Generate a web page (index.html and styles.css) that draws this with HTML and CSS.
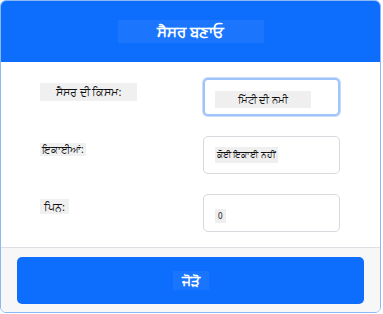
FILE: index.html
```html
<!DOCTYPE html>
<html lang="pa">

<head>
    <meta charset="UTF-8">
    <meta name="viewport" content="width=device-width, initial-scale=1.0">
    <title>ਸੈਸਰ ਬਣਾਓ</title>
    <link rel="stylesheet" href="styles.css">
</head>

<body>
    <div class="card">
        <header class="cardHeader">
            <span class="title">ਸੈਸਰ ਬਣਾਓ</span>
        </header>

        <div class="cardBody">
            <div class="label labelType"><span>ਸੈਸਰ ਦੀ ਕਿਸਮ:</span></div>
            <div class="field focused"><span class="value valueWide">ਮਿੱਟੀ ਦੀ ਨਮੀ</span></div>

            <div class="label labelUnits"><span>ਇਕਾਈਆਂ:</span></div>
            <div class="field"><span class="value valueSmall">ਕੋਈ ਇਕਾਈ ਨਹੀਂ</span></div>

            <div class="label labelPin"><span>ਪਿਨ:</span></div>
            <div class="field"><span class="value valueNum">0</span></div>
        </div>

        <div class="cardFooter">
            <button class="addButton"><span>ਜੋੜੋ</span></button>
        </div>
    </div>
</body>

</html>
```

FILE: styles.css
```css
body {
    margin: 0;
    font-family: "Noto Sans", "DejaVu Sans", sans-serif;
    background-color: white;
}

.card {
    width: 381px;
    height: 313px;
    box-sizing: border-box;
    border: 1px solid #8db8f6;
    border-radius: 6px;
    overflow: hidden;
    display: flex;
    flex-direction: column;
}

.cardHeader {
    height: 61px;
    background-color: #0d6efd;
    display: flex;
    align-items: center;
    justify-content: center;
}

.title {
    color: white;
    font-size: 15px;
    font-weight: bold;
    width: 146px;
    height: 23px;
    line-height: 23px;
    text-align: center;
    background-color: rgba(255, 255, 255, 0.06);
}

.cardBody {
    flex: 1;
    background-color: white;
    display: grid;
    grid-template-columns: 163px 137px;
    grid-auto-rows: 38px;
    row-gap: 20px;
    padding: 16px 0 0 39px;
}

.label span {
    display: inline-block;
    background-color: #f0f0f0;
    color: #111;
}

.labelType span {
    margin-top: 5px;
    width: 97px;
    height: 18px;
    line-height: 18px;
    font-size: 11px;
    text-align: center;
}

.labelUnits span {
    margin-top: 6px;
    padding: 0 2px;
    height: 13px;
    line-height: 13px;
    font-size: 10px;
}

.labelPin span {
    margin-top: 0;
    padding: 0 4px;
    height: 15px;
    line-height: 15px;
    font-size: 11px;
}

.field {
    box-sizing: border-box;
    border: 1px solid #d6d9de;
    border-radius: 5px;
    background-color: white;
    padding: 0 11px;
    display: flex;
    align-items: center;
}

.focused {
    border: 2px solid #9fc3fb;
    box-shadow: 0 0 0 1px #c9dcfb;
    padding: 0 10px;
}

.value {
    background-color: #efefef;
    color: #111;
}

.valueWide {
    width: 96px;
    height: 17px;
    line-height: 17px;
    font-size: 10px;
    text-align: center;
    margin-top: 4px;
}

.valueSmall {
    padding: 0 2px;
    height: 16px;
    line-height: 16px;
    font-size: 9px;
}

.valueNum {
    padding: 0 3px;
    height: 14px;
    line-height: 14px;
    font-size: 8px;
    margin-top: 5px;
}

.cardFooter {
    height: 65px;
    box-sizing: border-box;
    background-color: #f7f7f7;
    border-top: 1px solid #dcdfe3;
    padding: 9px 16px 8px 16px;
    display: flex;
}

.addButton {
    flex: 1;
    border: none;
    border-radius: 5px;
    background-color: #0d6efd;
    color: white;
    font-family: inherit;
    font-size: 14px;
    font-weight: bold;
}

.addButton span {
    display: inline-block;
    width: 36px;
    height: 19px;
    line-height: 19px;
    background-color: rgba(255, 255, 255, 0.05);
}
```
